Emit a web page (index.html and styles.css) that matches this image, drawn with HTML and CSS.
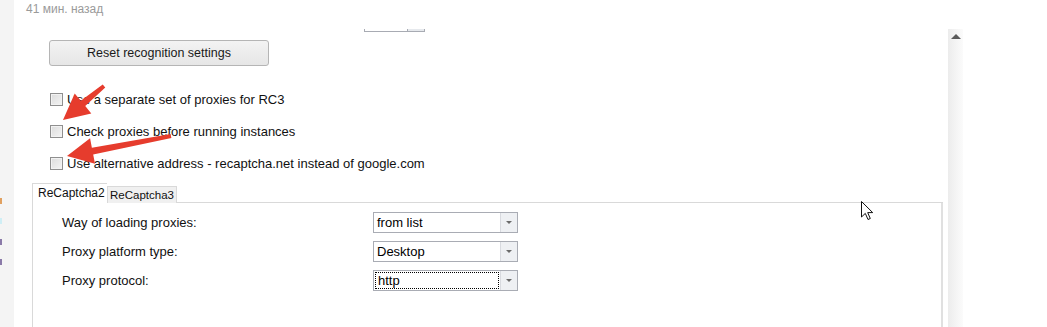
FILE: index.html
```html
<!DOCTYPE html>
<html>
<head>
<meta charset="utf-8">
<link rel="stylesheet" href="styles.css">
</head>
<body>
<div class="page">
  <div class="sidebar">
    <span class="mark m1"></span>
    <span class="mark m2"></span>
    <span class="mark m3"></span>
    <span class="mark m4"></span>
  </div>
  <div class="main">
    <div class="time">41 мин. назад</div>
    <div class="window">
      <div class="content">
        <div class="combo-stub"><span class="stub-btn"></span></div>
        <button class="reset-btn">Reset recognition settings</button>
        <div class="checks">
          <label class="check"><span class="box"></span><span>Use a separate set of proxies for RC3</span></label>
          <label class="check"><span class="box"></span><span>Check proxies before running instances</span></label>
          <label class="check"><span class="box"></span><span>Use alternative address - recaptcha.net instead of google.com</span></label>
        </div>
        <div class="tabs">
          <div class="tab-bar">
            <div class="tab active">ReCaptcha2</div>
            <div class="tab">ReCaptcha3</div>
            <div class="tab-fill"></div>
          </div>
          <div class="tab-panel">
            <div class="row"><span class="lbl">Way of loading proxies:</span><div class="select"><span class="val">from list</span><span class="drop"><i></i></span></div></div>
            <div class="row"><span class="lbl">Proxy platform type:</span><div class="select"><span class="val">Desktop</span><span class="drop"><i></i></span></div></div>
            <div class="row"><span class="lbl">Proxy protocol:</span><div class="select"><span class="val focus">http</span><span class="drop"><i></i></span></div></div>
          </div>
        </div>
        <svg class="arrows" width="200" height="180" viewBox="0 0 200 180">
          <polygon fill="#e63c2d" points="89.28,58.54 69.23,77.1 75.29,84.41 47,91 58.71,64.41 64.77,71.72 86.72,55.46"/>
          <polygon fill="#e63c2d" points="155.38,108.96 77.19,125.53 78.99,134.86 51,127 74.07,109.32 75.87,118.65 154.62,105.04"/>
        </svg>
        <svg class="cursor" width="14" height="20" viewBox="0 0 14 20">
          <polygon points="0.5,0.5 0.5,16 4.3,12.4 7,18.5 9.3,17.5 6.7,11.6 11.7,11.6" fill="#fff" stroke="#111" stroke-width="1" stroke-linejoin="round"/>
        </svg>
      </div>
      <div class="scrollbar"><span class="up"></span></div>
      <div class="right"></div>
    </div>
  </div>
</div>
</body>
</html>
```

FILE: styles.css
```css
html, body {
  margin: 0;
  padding: 0;
  background: #fff;
}
.page {
  display: flex;
  width: 1047px;
  height: 327px;
  overflow: hidden;
  font-family: "Liberation Sans", Arial, sans-serif;
}
.sidebar {
  width: 14px;
  flex: none;
  background: #f4f4f4;
  position: relative;
}
.mark {
  position: absolute;
  left: 0;
  width: 2px;
  height: 6px;
}
.m1 { top: 198px; background: #e0a060; }
.m2 { top: 218px; background: #cfeef5; }
.m3 { top: 239px; background: #8a7aa8; }
.m4 { top: 259px; background: #8a7aa8; }
.main {
  flex: 1;
  display: flex;
  flex-direction: column;
  min-height: 0;
}
.time {
  flex: none;
  height: 29px;
  padding-left: 12px;
  font-size: 12px;
  line-height: 18px;
  color: #9a9a9a;
}
.window {
  flex: 1;
  min-height: 0;
  display: flex;
  overflow: hidden;
}
.content {
  width: 934px;
  flex: none;
  position: relative;
  display: flex;
  flex-direction: column;
  align-items: flex-start;
}
.combo-stub {
  margin-left: 350px;
  width: 59px;
  height: 2px;
  border: 1px solid #a8abb3;
  border-top: none;
  display: flex;
  justify-content: flex-end;
  flex: none;
}
.stub-btn {
  width: 16px;
  height: 2px;
  background: #e6e9ed;
  border-left: 1px solid #a8abb3;
}
.reset-btn {
  flex: none;
  margin: 8px 0 0 35px;
  width: 220px;
  height: 26px;
  border: 1px solid #b5b5b5;
  border-radius: 3px;
  background: linear-gradient(#f3f3f3, #e6e6e6);
  font-family: inherit;
  font-size: 12.5px;
  color: #1a1a1a;
  padding: 0;
}
.checks {
  flex: none;
  margin: 27px 0 0 36px;
  display: flex;
  flex-direction: column;
  gap: 19px;
}
.check {
  display: flex;
  align-items: center;
  gap: 4px;
  height: 13px;
  font-size: 13px;
  color: #111;
  white-space: nowrap;
}
.box {
  width: 11px;
  height: 11px;
  border: 1px solid #8f8f8f;
  background: linear-gradient(135deg, #dcdcdc, #f4f4f4);
  box-shadow: inset 0 0 0 1px #f2f2f2;
  flex: none;
}
.tabs {
  flex: none;
  margin: 13px 0 0 18px;
  width: 911px;
  display: flex;
  flex-direction: column;
}
.tab-bar {
  display: flex;
  align-items: flex-end;
  height: 20px;
}
.tab {
  font-size: 11.5px;
  color: #111;
  box-sizing: border-box;
  border: 1px solid #d9d9d9;
  border-bottom: none;
  height: 17px;
  line-height: 16px;
  padding: 0 2px;
  background: #f0f0f0;
}
.tab.active {
  font-size: 12px;
  height: 20px;
  line-height: 18px;
  background: #fff;
  padding: 0 5px;
  width: 75px;
  border-right: none;
}
.tab-fill {
  flex: 1;
  border-bottom: 1px solid #d9d9d9;
}
.tab-panel {
  height: 140px;
  border-left: 1px solid #d9d9d9;
  border-right: 2px solid #e0e0e0;
  background: #fff;
  display: flex;
  flex-direction: column;
  gap: 8px;
  padding-top: 9px;
}
.row {
  display: flex;
  align-items: center;
  height: 21px;
}
.lbl {
  width: 311px;
  padding-left: 29px;
  font-size: 13px;
  color: #111;
}
.select {
  width: 143px;
  height: 19px;
  border: 1px solid #a9acb4;
  display: flex;
  background: #fff;
}
.val {
  flex: 1;
  font-size: 13px;
  color: #000;
  padding-left: 3px;
  line-height: 19px;
}
.val.focus {
  margin: 1px;
  padding-left: 2px;
  line-height: 15px;
  border: 1px dotted #000;
}
.drop {
  width: 16px;
  border-left: 1px solid #d8dadf;
  background: #eef0f3;
  display: flex;
  align-items: center;
  justify-content: center;
}
.drop i {
  width: 0;
  height: 0;
  border-left: 3px solid transparent;
  border-right: 3px solid transparent;
  border-top: 3px solid #6a6a6a;
}
.arrows {
  position: absolute;
  left: 2px;
  top: 0;
}
.cursor {
  position: absolute;
  left: 847px;
  top: 172px;
}
.scrollbar {
  width: 15px;
  flex: none;
  background: linear-gradient(to right, #ececec, #fbfbfb);
  display: flex;
  justify-content: center;
  align-items: flex-start;
  padding-top: 5px;
  box-sizing: border-box;
}
.up {
  width: 0;
  height: 0;
  border-left: 5px solid transparent;
  border-right: 5px solid transparent;
  border-bottom: 5px solid #5a5a5a;
}
.right {
  flex: 1;
}
```
